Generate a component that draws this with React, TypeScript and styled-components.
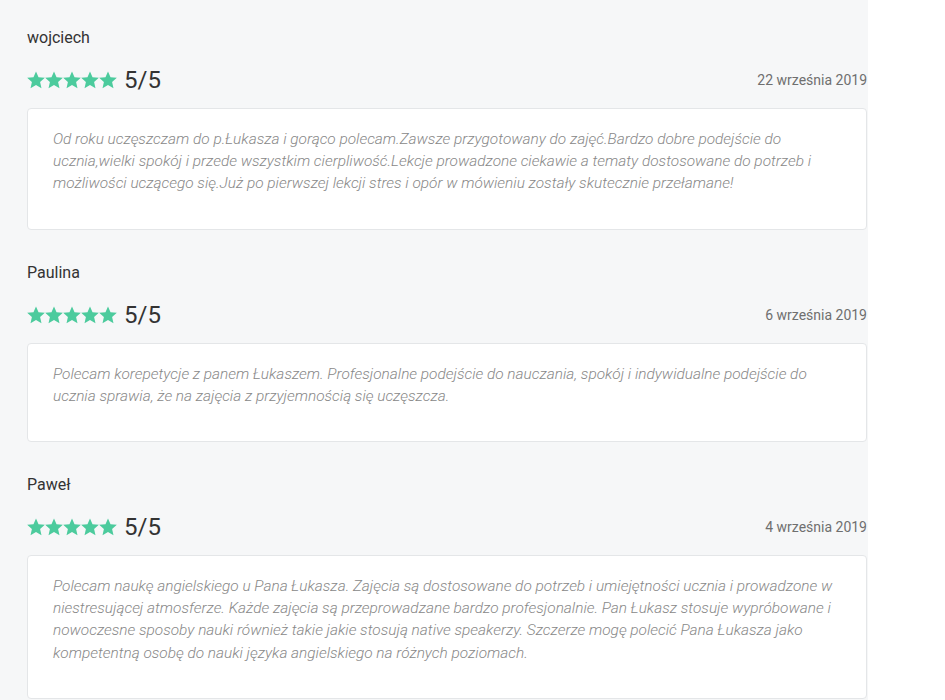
import React from "react";
import styled, { createGlobalStyle } from "styled-components";

const GlobalStyle = createGlobalStyle`
  body {
    margin: 0;
    background-color: #ffffff;
    font-family: Roboto, "Liberation Sans", sans-serif;
  }
`;

const Page = styled.div`
  width: 868px;
  min-height: 700px;
  box-sizing: border-box;
  background-color: #f6f7f8;
  padding: 26px 1px 0 27px;
`;

const Review = styled.section`
  margin-bottom: 31px;
`;

const Author = styled.div`
  font-size: 16px;
  line-height: 24px;
  color: #333333;
`;

const RatingRow = styled.div`
  display: flex;
  align-items: center;
  justify-content: space-between;
  height: 28px;
  margin: 16px 0 14px;
`;

const Rating = styled.div`
  display: flex;
  align-items: center;
  gap: 7px;
`;

const Stars = styled.div`
  display: flex;
`;

const Score = styled.span`
  font-size: 24px;
  line-height: 28px;
  color: #333333;
`;

const DateLabel = styled.span`
  font-size: 14px;
  color: #6f6f6f;
`;

const Card = styled.div`
  background-color: #ffffff;
  border: 1px solid #e4e6e8;
  border-radius: 4px;
  padding: 19px 25px 34px;
`;

const Text = styled.p`
  margin: 0;
  font-size: 15.4px;
  line-height: 22.2px;
  font-weight: 300;
  font-style: italic;
  color: #888888;
`;

const Star = () => (
  <svg width="18" height="18" viewBox="1 1 22 22">
    <path
      d="M12 1.5l3.1 7.1 7.7.7-5.8 5.1 1.7 7.6L12 18l-6.7 4 1.7-7.6L1.2 9.3l7.7-.7z"
      fill="#4ccb9d"
    />
  </svg>
);

const reviews = [
  {
    author: "wojciech",
    date: "22 września 2019",
    text: "Od roku uczęszczam do p.Łukasza i gorąco polecam.Zawsze przygotowany do zajęć.Bardzo dobre podejście do ucznia,wielki spokój i przede wszystkim cierpliwość.Lekcje prowadzone ciekawie a tematy dostosowane do potrzeb i możliwości uczącego się.Już po pierwszej lekcji stres i opór w mówieniu zostały skutecznie przełamane!",
  },
  {
    author: "Paulina",
    date: "6 września 2019",
    text: "Polecam korepetycje z panem Łukaszem. Profesjonalne podejście do nauczania, spokój i indywidualne podejście do ucznia sprawia, że na zajęcia z przyjemnością się uczęszcza.",
  },
  {
    author: "Paweł",
    date: "4 września 2019",
    text: "Polecam naukę angielskiego u Pana Łukasza. Zajęcia są dostosowane do potrzeb i umiejętności ucznia i prowadzone w niestresującej atmosferze. Każde zajęcia są przeprowadzane bardzo profesjonalnie. Pan Łukasz stosuje wypróbowane i nowoczesne sposoby nauki również takie jakie stosują native speakerzy. Szczerze mogę polecić Pana Łukasza jako kompetentną osobę do nauki języka angielskiego na różnych poziomach.",
  },
];

const App = () => {
  return (
    <>
      <GlobalStyle />
      <Page>
        {reviews.map((review) => (
          <Review key={review.author}>
            <Author>{review.author}</Author>
            <RatingRow>
              <Rating>
                <Stars>
                  {[0, 1, 2, 3, 4].map((i) => (
                    <Star key={i} />
                  ))}
                </Stars>
                <Score>5/5</Score>
              </Rating>
              <DateLabel>{review.date}</DateLabel>
            </RatingRow>
            <Card>
              <Text>{review.text}</Text>
            </Card>
          </Review>
        ))}
      </Page>
    </>
  );
};

export default App;
